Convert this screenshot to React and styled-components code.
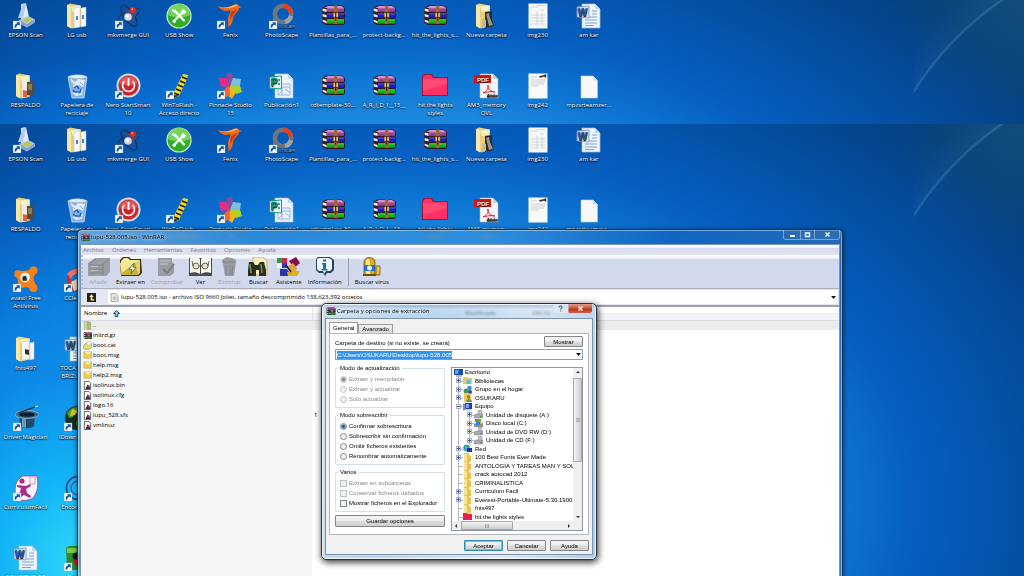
import React from "react";
import styled, { createGlobalStyle, css } from "styled-components";

const GlobalStyle = createGlobalStyle`
  * { box-sizing: border-box; }
  body {
    margin: 0;
    overflow: hidden;
    font-family: "Open Sans", "Noto Sans", sans-serif;
    font-size: 6px;
    line-height: 8px;
    color: #000;
  }
  button, input { font: inherit; color: inherit; margin: 0; padding: 0; border: 0; background: none; }
`;

const Page = styled.div`
  position: relative;
  display: flex;
  flex-direction: column;
  height: 100vh;
  overflow: hidden;
`;

const Wallpaper = styled.div`
  display: grid;
  grid-template-columns: repeat(20, 1fr);
  align-content: start;
  overflow: hidden;
  background:
    radial-gradient(circle at 266px 260px, transparent 313px, rgba(120, 180, 230, 0.28) 315px, rgba(90, 150, 200, 0.06) 317px, transparent 340px) right top / 110px 100px no-repeat,
    radial-gradient(circle at 100% 0, rgba(40, 90, 120, 0.45) 0, transparent 130px),
    radial-gradient(circle at 90px 440px, #34dcfa 0, #12b4f6 90px, rgba(10, 140, 236, 0.8) 190px, transparent 380px) left top / 100% 452px,
    radial-gradient(62% 97% at 39% 84%, #2aa4f0 0, #1c88dc 60%, #0c74d2 70%, #0660c2 80%, #0550a6 98%, #03407e 120%) left top / 100% 452px;
`;

const TopDesktop = styled(Wallpaper)`
  flex: none;
  height: 124px;
  grid-auto-rows: 70px;
`;

const MainDesktop = styled(Wallpaper)`
  flex: 1;
  min-height: 0;
  grid-auto-rows: 15.4%;
`;

const IconCell = styled.button`
  display: flex;
  flex-direction: column;
  align-items: center;
  gap: 2px;
  padding-top: 3px;
  color: #fff;
  white-space: pre;
  text-align: center;
  text-shadow: 0 1px 1px #000, 0 0 2px rgba(0, 0, 0, 0.8);
  ${(p) => p.$col && css`grid-column: ${p.$col};`}
`;

const Glyph = styled.svg`
  display: block;
  flex: none;
  width: ${(p) => p.$size || 26}px;
  height: ${(p) => p.$h || p.$size || 26}px;
`;

/* ---------- drawings ---------- */

const Shortcut = () => (
  <g>
    <rect x="0" y="18" width="8" height="8" fill="#f4f8fc" stroke="#8aa" strokeWidth=".4" />
    <path d="M1.600 24.600c0-2.600.8-3.800 2.600-4l-.8-1.300h3.400v3.600l-1-1.100c-1.500.2-2.300 1-2.600 2.800z" fill="#17539c" />
  </g>
);

const Books = () => (
  <g>
    <path d="M2 5l4-2.500h15l4 2.500v4l-1 1 1 1v4l-1 1 1 1v3.500l-2 1.500H6l-4-2.500V16l1-1-1-1v-3l1-1-1-1z" fill="#2c1c28" />
    <path d="M4 5L8 3h13l3 2H7z" fill="#d890cc" />
    <path d="M7 5h17v3.800H7z" fill="#9c4494" />
    <path d="M7 10.400h17v4.200H7z" fill="#1420d4" />
    <path d="M7 16.400h17v4.200H7z" fill="#10b018" />
    <path d="M7 5.600h17M7 11h17" stroke="#c478bc" strokeWidth=".6" />
    <path d="M7 16.900h17" stroke="#50e850" strokeWidth=".9" />
    <path d="M2.600 5.400L6.600 6.200v2.800L2.600 8zM2.600 11L6.600 12v2.600l-4-1.200zM2.600 16.600L6.600 18v2.600l-4-2z" fill="#ece6ea" />
    <path d="M14 2.500h3.400v18.500H14z" fill="#9c6a34" />
    <path d="M13 9.600h5.400v4.800H13z" fill="#e0c48c" stroke="#4c2a10" strokeWidth=".8" />
    <path d="M15.700 9v8.500" stroke="#2c1608" strokeWidth="1" />
  </g>
);

const OpenFolder = ({ children }) => (
  <g>
    <path d="M3 2l3-1.500L17 2.500v21L8 25.500 3 23z" fill="#e8cf7c" />
    <path d="M3 2l4 1.500v22L3 23z" fill="#f6e8ac" />
    <path d="M7 3.500l9-1v5L9 9z" fill="#fbf0c0" />
    {children}
  </g>
);

const Sheet = ({ children }) => (
  <g>
    <path d="M6 1h13l5 5v19H6z" fill="#eef4fb" stroke="#a8bcd4" strokeWidth=".7" />
    <path d="M19 1v5h5z" fill="#c4d6ea" />
    {children}
  </g>
);

const art = {
  scan: (
    <g>
      <path d="M8 1l5-.8 3 13.500-8 3z" fill="#dfeafc" />
      <path d="M5 15L10 .600l3 .4-3 14z" fill="#b4cbf0" />
      <path d="M6 17l9-4 7 3.500-8 5z" fill="#b9c8e4" />
      <path d="M9 17l6-2.500 4.500 2-6 3z" fill="#b5cf2c" />
      <path d="M6 17l8 4.500 8-5v3l-8 5-8-4z" fill="#8fa6d0" />
      <Shortcut />
    </g>
  ),
  folderDocs: (
    <OpenFolder>
      <path d="M10 5l6-1v20l-6 1zM17 5l5-1v19l-5 1z" fill="#f6f8fb" stroke="#b4bec8" strokeWidth=".5" />
      <path d="M12 13h2v4h-2zM18 12h2v4h-2z" fill="#4a86c4" />
    </OpenFolder>
  ),
  folderPics: (
    <OpenFolder>
      <path d="M9 7l6-1v18l-6 1z" fill="#f0ece4" />
      <path d="M14 9h7v14l-7-1z" fill="#5a4a30" />
      <path d="M15 11h4v6h-4z" fill="#8c7c54" />
      <path d="M10 17l4 1v6h-4z" fill="#e2603c" />
    </OpenFolder>
  ),
  folderDark: (
    <OpenFolder>
      <path d="M12 9l7-1v8l2 7-9 2z" fill="#2c2a28" />
      <path d="M13 11l3-1 1 5 3 7-4 1z" fill="#98948c" />
      <path d="M9 16l4 1v7l-4 1z" fill="#c8b890" />
    </OpenFolder>
  ),
  folderFonts: (
    <OpenFolder>
      <path d="M9 6l7-1v18l-7 1zM17 7l4-1v17l-4 1z" fill="#fafafa" stroke="#c0c0b8" strokeWidth=".5" />
      <path d="M12 13l4 1v5l-4-1z" fill="#333" />
    </OpenFolder>
  ),
  atom: (
    <g fill="none">
      <ellipse cx="14" cy="12" rx="12" ry="4.500" transform="rotate(-28 14 12)" stroke="#26364c" strokeWidth="1" />
      <ellipse cx="14" cy="13" rx="12" ry="5" transform="rotate(55 14 13)" stroke="#1c2c44" strokeWidth="1" />
      <circle cx="15" cy="12" r="5.500" fill="#454a78" />
      <circle cx="13" cy="14" r="3.800" fill="#d0d6e6" />
      <circle cx="12.400" cy="13.200" r="1.800" fill="#fff" />
      <circle cx="18" cy="7" r="3" fill="#e02a1c" />
      <circle cx="17.200" cy="6.200" r="1" fill="#ff9080" />
      <Shortcut />
    </g>
  ),
  usb: (
    <g>
      <circle cx="13" cy="13" r="12.600" fill="#d8ead0" />
      <circle cx="13" cy="13" r="11.400" fill="#2fae28" />
      <path d="M2 12a11 11 0 0 1 22 0c-6 3-16 3-22 0z" fill="#74d45c" />
      <path d="M8 18l8.500-8.500M9 8l9 9.500" stroke="#fff" strokeWidth="2.400" strokeLinecap="round" />
      <path d="M15 8l3-2.500.5 2 2 .8-2.500 3-3-.5zM6.500 6l3.500 1-1 3-3-2zM6 18l2-1.500 2 2-1.500 2z" fill="#fff" />
    </g>
  ),
  fenix: (
    <g>
      <path d="M1 3c6 3 11 1 16-1 3-1 5 0 5 1l3 1-3 1c0 4-5 5-6 10-.5 4-1 7-5 9 1-5-1-7 1-12 1-2 2-4 1-5-3 2-9 1-12-4z" fill="#f0691c" />
      <path d="M1 3c6 3 11 1 16-1 2-1 4 0 4 1-3 0-5 2-8 2S4 6 1 3z" fill="#ffb03c" />
      <path d="M14 9c2-1 5-2 6-3-1 4-5 5-6 11-1-2-1-6 0-8z" fill="#c63c0c" />
      <Shortcut />
    </g>
  ),
  photo: (
    <g fill="none">
      <circle cx="14" cy="11" r="8.200" stroke="#70757c" strokeWidth="4.600" />
      <path d="M14.500 2.800A8.200 8.200 0 0 1 22 9.500" stroke="#f03c14" strokeWidth="4.600" />
      <path d="M22 13a8.200 8.200 0 0 1-6 6" stroke="#9ca2aa" strokeWidth="4.600" />
      <path d="M4 10h4v12H4z" fill="#70757c" />
      <text x="9" y="25" fontSize="3.500" fill="#a4b4c8" fontFamily="Liberation Sans">TO SCAPE</text>
      <Shortcut />
    </g>
  ),
  rar: <Books />,
  scanPage: (
    <g>
      <path d="M3.500.5h19v25h-19z" fill="#f6f7f8" />
      <path d="M6 4h7M6 12h14M6 15h14M6 18h14M6 21h8M15 21h5M15 7h4M12 2.500h8M12 8v13M17 10v10" stroke="#c4c8ce" strokeWidth=".7" />
    </g>
  ),
  scanLetter: (
    <g>
      <path d="M3.500.5h19v25h-19z" fill="#fafafa" />
      <path d="M14 3.500l4-1 3-1v3l-2-1-4 1z" stroke="#333" strokeWidth=".5" fill="#333" />
      <path d="M6 4h6M6 7h14M6 9h14M6 11h13M6 13h8" stroke="#b4b8be" strokeWidth=".7" />
    </g>
  ),
  word: (
    <Sheet>
      <path d="M9 14h12M9 17h12M9 20h12M9 22.500h9M16 8h5M16 11h5" stroke="#7fa4d4" strokeWidth="1.200" />
      <path d="M1 4l12-1v12L1 14z" fill="#e8f0fa" stroke="#6f97cc" strokeWidth=".8" />
      <text x="2" y="12.500" fontSize="10" fontWeight="700" fill="#1f5bb0" fontFamily="Liberation Sans">W</text>
    </Sheet>
  ),
  publisher: (
    <Sheet>
      <path d="M9 11h12v11H9zM9 14h12M13 14v8M16 16l5 4M9 22l5-5" stroke="#8fb0e0" strokeWidth=".9" fill="none" />
      <path d="M.500 4l12-1v13L.500 15z" fill="#e4f6f2" stroke="#179c88" strokeWidth="1" />
      <text x="2" y="13" fontSize="10" fontWeight="700" fill="#0f8c78" fontFamily="Liberation Sans">P</text>
      <path d="M9 6h2v2H9zM9 10h2v2H9z" fill="#2ca894" />
    </Sheet>
  ),
  bin: (
    <g>
      <path d="M4 4h19l-3 21H8z" fill="#b0cdea" fillOpacity=".75" stroke="#dcebf8" strokeWidth=".7" />
      <path d="M4 4c2-3 17-3 19 0-3 2-16 2-19 0z" fill="#e4edf6" stroke="#8ea8c4" strokeWidth=".5" />
      <path d="M6 5l5 4 3-3 7 1-2 7-4-2-5 3zM8 20l4 3 6-1 1-6-6 3z" fill="#eef5fb" fillOpacity=".85" />
      <path d="M8 10l3 2M16 9l3 3M14 21l4-2" stroke="#8c98a8" strokeWidth=".8" />
      <path d="M10 15l3-2 2 3M11 19h5l1-3M9 17l2 2" stroke="#1f5ccc" strokeWidth="1.500" fill="none" />
    </g>
  ),
  nero: (
    <g fill="none">
      <circle cx="13.500" cy="12.500" r="12" fill="#dcdce0" />
      <circle cx="13.500" cy="12.500" r="10.500" fill="#a8a4a8" />
      <circle cx="13.500" cy="12.500" r="9.800" fill="#cc2428" />
      <path d="M4.500 10a9.500 9.500 0 0 1 18 0c-6 3-12 3-18 0z" fill="#e4585c" />
      <path d="M9.500 8a6 6 0 1 0 8 0" stroke="#fff" strokeWidth="1.600" />
      <path d="M13.500 5v8" stroke="#fff" strokeWidth="1.800" />
      <Shortcut />
    </g>
  ),
  flash: (
    <g>
      <path d="M17 1l5 1-1 4-8 17-5 2-1-4z" fill="#f4dc14" />
      <path d="M16 4l5 2M14 8l5 2M12 12l5 2M10 16l5 2M8 20l5 2" stroke="#15140c" strokeWidth="1.800" />
      <path d="M13 22.500l-5 2.500-1-3z" fill="#222" />
      <Shortcut />
    </g>
  ),
  pinnacle: (
    <g>
      <path d="M9 1l6-1 2 9-4 3z" fill="#86509c" />
      <path d="M16 5l8 1-1 7-10 0z" fill="#7cc0dc" />
      <path d="M13 13h10l2 6-6 2z" fill="#a8d42c" />
      <path d="M13 13l6 6-4 7-5-4z" fill="#f6b41c" />
      <path d="M12 12l1 10-6 3-4-4z" fill="#f2682c" />
      <path d="M2 5l8 0 3 8-9 1z" fill="#e42c86" />
      <Shortcut />
    </g>
  ),
  pink: (
    <g>
      <path d="M0 4l2-3h8l2 3h14v19H0z" fill="#a01434" />
      <path d="M1 4l2-2h6l2 3h14v17H1z" fill="#ff3064" />
      <path d="M1 6h24v5L1 18z" fill="#ff5c84" fillOpacity=".55" />
    </g>
  ),
  pdf: (
    <g>
      <path d="M7 1h13l5 5v19H7z" fill="#f8f8f8" stroke="#b0b0b0" strokeWidth=".6" />
      <path d="M20 1v5h5z" fill="#d0d0d0" />
      <path d="M1 2h17v8H1z" fill="#d4161c" />
      <text x="4" y="8.500" fontSize="6" fontWeight="700" fill="#fff" fontFamily="Liberation Sans">PDF</text>
      <path d="M10 20c4-2 6-5 5-8-1 4 3 7 7 7-4-1-8 0-12 1z" fill="none" stroke="#e0282c" strokeWidth="1" />
      <text x="14" y="24" fontSize="3.500" fontWeight="700" fill="#222" fontFamily="Liberation Sans">Adobe</text>
    </g>
  ),
  blank: (
    <g>
      <path d="M5 3h12l4.500 4.500V25H5z" fill="#f8f8f8" stroke="#c4ccd4" strokeWidth=".6" />
      <path d="M17 3v4.500h4.500z" fill="#d4dae2" />
    </g>
  ),
  avast: (
    <g fill="#f48218">
      <circle cx="20.500" cy="4.500" r="4" />
      <circle cx="5" cy="8" r="3.800" />
      <circle cx="20.500" cy="22" r="4" />
      <path d="M5 4.500c4 1 6 0 9 0 2 0 3-1 3-2l6 5c-2 2-3 4-2 7l3 7-6 4c-1-4-3-5-7-4-4 0-6 4-9 2 0-4 3-5 3-8s-1-4-3-5z" />
      <circle cx="12" cy="11.500" r="4.800" fill="#fff" />
      <text x="9.500" y="14" fontSize="7.500" fontWeight="700" fill="#222" fontFamily="Liberation Sans">a</text>
      <Shortcut />
    </g>
  ),
  ccleaner: (
    <g>
      <path d="M15 2a11.500 11.500 0 1 0 9 18l-7-3a6 6 0 1 1 0-8l6-4c-2-2-5-3-8-3z" fill="#d8281c" />
      <path d="M3 8c3-4 8-6 14-5l-3 5c-4 0-6 2-7 5z" fill="#f07060" />
      <path d="M7 16l8-4 4 9-9 4z" fill="#f0d8c0" />
      <Shortcut />
    </g>
  ),
  hat: (
    <g>
      <path d="M6 10h16l-1 11c-3 3-11 3-14 0z" fill="#244a6c" />
      <path d="M9 11h4v12l-4-1z" fill="#6a98bc" />
      <ellipse cx="14" cy="9.500" rx="12" ry="4" fill="#3e6c90" stroke="#9cc0dc" strokeWidth=".7" />
      <ellipse cx="14" cy="9.500" rx="8" ry="2.300" fill="#0e2030" />
      <path d="M5 8L25 1" stroke="#152030" strokeWidth="1.300" />
      <path d="M22 2l3-1" stroke="#fff" strokeWidth="1.300" />
      <Shortcut />
    </g>
  ),
  globe: (
    <g>
      <circle cx="13" cy="13" r="12" fill="#182c20" />
      <path d="M3 8c3-6 12-8 17-4l-4 4-5-1-2 5-4 1zM13 14l7-1 1 6-6 5-3-5z" fill="#3ca02c" />
      <path d="M8 4l6 2-3 4-5 1z" fill="#e4c030" />
      <Shortcut />
    </g>
  ),
  curriculum: (
    <g>
      <path d="M10 1h14c2 10 0 17-4 22-4 3-14 3-17 1C1 13 2 5 10 1z" fill="#fbf6fa" stroke="#a84c98" strokeWidth=".9" />
      <circle cx="9" cy="6" r="2.600" fill="#a8308c" />
      <path d="M17 2h5v7h-5z" fill="none" stroke="#d890c8" />
      <path d="M4 10l9 1 4-2 1 2-5 3 1 4 4 3-1 2-6-3-3 2-2-2 2-7-4-1z" fill="#a8308c" />
      <Shortcut />
    </g>
  ),
  encore: (
    <g fill="none">
      <circle cx="14" cy="13" r="11.500" stroke="#28488c" strokeWidth="1.800" />
      <circle cx="14" cy="13" r="7" stroke="#3c64a8" strokeWidth="1.500" />
      <Shortcut />
    </g>
  ),
  bug: (
    <g>
      <path d="M2 3l3-2h18v24H3z" fill="#2c8c2c" />
      <path d="M3 3h20v5H3z" fill="#7cc84c" />
      <circle cx="15" cy="15" r="6" fill="#c4281c" />
      <circle cx="12" cy="11" r="3.500" fill="#181818" />
      <Shortcut />
    </g>
  ),
};

const topIcons = [
  ["scan", "EPSON Scan"],
  ["folderDocs", "LG usb"],
  ["atom", "mkvmerge GUI"],
  ["usb", "USB Show"],
  ["fenix", "Fenix"],
  ["photo", "PhotoScape"],
  ["rar", "Plantillas_para_..."],
  ["rar", "protect-backg..."],
  ["rar", "hit_the_lights_s..."],
  ["folderDark", "Nueva carpeta"],
  ["scanPage", "img230"],
  ["word", "am kar"],
  ["folderPics", "RESPALDO", 1],
  ["bin", "Papelera de\nreciclaje"],
  ["nero", "Nero StartSmart\n10"],
  ["flash", "WinToFlash -\nAcceso directo"],
  ["pinnacle", "Pinnacle Studio\n15"],
  ["publisher", "Publicación1"],
  ["rar", "cdtemplate-30..."],
  ["rar", "A_R_I_D_I__13__"],
  ["pink", "hit the lights\nstyles"],
  ["pdf", "AM3_memory\nQVL"],
  ["scanLetter", "img242"],
  ["blank", "mpzsrteamzer..."],
];

const sideIcons = [
  ["avast", "avast! Free\nAntivirus", 1],
  ["ccleaner", "CCleaner"],
  ["folderFonts", "fnts497", 1],
  ["word", "TOCA DE LA\nBRIZUELAS"],
  ["hat", "Driver Magician", 1],
  ["globe", "IDownloader"],
  ["curriculum", "CurriculumFacil", 1],
  ["encore", "Encore 500"],
  ["word", "SOLICITUD DE", 1],
  ["bug", "Casper"],
];

const Icons = ({ items }) =>
  items.map(([name, label, col], i) => (
    <IconCell key={i} $col={col}>
      <Glyph viewBox="0 0 26 26">{art[name]}</Glyph>
      {label}
    </IconCell>
  ));

/* ---------- WinRAR window ---------- */

const Window = styled.section`
  position: absolute;
  display: flex;
  flex-direction: column;
  left: 77px;
  right: 181px;
  top: 229px;
  bottom: -8px;
  padding: 0 2px;
  border: 1px solid #1c3450;
  border-bottom: 0;
  border-radius: 5px 5px 0 0;
  background: linear-gradient(100deg, rgba(130, 180, 225, 0.75) 0, rgba(60, 145, 220, 0.55) 22%, rgba(60, 150, 225, 0.6) 50%, rgba(20, 100, 190, 0.7) 72%, rgba(70, 130, 190, 0.6) 100%);
  backdrop-filter: blur(2px);
  box-shadow: inset 0 0 0 1px rgba(200, 225, 245, 0.55), 0 1px 5px rgba(0, 0, 0, 0.6);
`;

const TitleBar = styled.header`
  display: flex;
  align-items: flex-start;
  flex: none;
  height: 14px;
`;

const Title = styled.h1`
  display: flex;
  align-items: center;
  gap: 1px;
  flex: 1;
  height: 14px;
  margin: 0;
  padding-left: 1px;
  font-size: 6px;
  font-weight: 400;
  text-shadow: 0 0 3px rgba(255, 255, 255, 0.9), 0 0 6px rgba(255, 255, 255, 0.7);
`;

const Controls = styled.div`
  display: flex;
  border: 1px solid rgba(190, 215, 240, 0.55);
  border-top: 0;
  border-radius: 0 0 3px 3px;
  overflow: hidden;
`;

const ControlButton = styled.button`
  display: grid;
  place-items: center;
  width: ${(p) => p.$w}px;
  height: 9px;
  background: ${(p) => p.$bg || "rgba(60, 110, 165, 0.4)"};
  & + & { border-left: 1px solid rgba(190, 215, 240, 0.55); }
`;

const Client = styled.div`
  display: flex;
  flex-direction: column;
  flex: 1;
  min-height: 0;
  border: 1px solid #7a94ae;
  border-bottom: 0;
  background: #fff;
`;

const MenuBar = styled.nav`
  display: flex;
  align-items: center;
  gap: 8px;
  flex: none;
  height: 10px;
  padding: 0 2px;
  color: #7c7c84;
  background: linear-gradient(#fff 0, #f2f4fa 25%, #d8dcee 35%, #dfe3f2 100%);
`;

const ToolBar = styled.div`
  display: flex;
  align-items: center;
  gap: 6px;
  flex: none;
  height: 34px;
  padding: 0 4px;
  border-left: 2px dotted #b8bfd8;
  border-bottom: 1px solid #a9adb8;
  background: linear-gradient(#fff 0, #f0f2fa 10%, #d3d9ec 14%, #d3d9ec 100%);
`;

const Tool = styled.button`
  display: flex;
  flex-direction: column;
  align-items: center;
  gap: 2px;
  min-width: 23px;
  color: ${(p) => (p.disabled ? "#a0a2ac" : "#000")};
`;

const Divider = styled.div`
  width: 1px;
  height: 28px;
  background: #9a9eac;
`;

const AddressRow = styled.div`
  display: flex;
  align-items: center;
  flex: none;
  height: 18px;
  gap: 12px;
  padding: 0 1px 0 6px;
  border-bottom: 2px solid #9c9fa8;
  background: #e4e7f3;
`;

const AddressBox = styled.div`
  display: flex;
  align-items: center;
  gap: 2px;
  flex: 1;
  height: 14px;
  padding: 0 2px;
  background: #fff;
`;

const AddressInput = styled.input`
  flex: 1;
  min-width: 0;
  outline: 0;
`;

const FileTable = styled.table`
  width: 100%;
  table-layout: fixed;
  border-collapse: collapse;
  text-align: left;
  th {
    height: 13px;
    padding: 0 3px;
    font-weight: 400;
    background: linear-gradient(#fff 0, #fff 40%, #f2f3f5 50%, #f4f5f7 100%);
    border-bottom: 1px solid #d8dce2;
  }
  th:first-child { border-right: 1px solid #e0e2e6; }
  td { height: 10px; padding: 0 2px; }
`;

const Files = styled.div`
  flex: 1;
  background: linear-gradient(90deg, #f6f6f6 231px, #fff 231px);
`;

const FileRow = styled.tr`
  background: ${(p) => (p.$active ? "#ececec" : "transparent")};
`;

const NameCell = styled.div`
  display: flex;
  align-items: center;
  gap: ${(p) => p.$gap || 1}px;
`;

const gray = "#9b9da4";

const tools = [
  ["Añadir", true, (
    <g fill={gray}>
      <path d="M1 6l7-5h15v14l-4 4H1z" />
      <path d="M2 8h14M2 12h14M2 16h14M16 7v11M8 2l-4 4M16 7l6-5" stroke="#7f8188" strokeWidth=".9" fill="none" />
      <path d="M4 9.500h7M4 13.500h7" stroke="#c4c6cc" strokeWidth=".8" />
    </g>
  )],
  ["Extraer en", false, (
    <g>
      <path d="M1 3l3-3h6l2 2h10l1 14-3 3H2z" fill="#3c3208" />
      <path d="M2 4l3-3h4l2 2h9v3H2z" fill="#f4ea9c" />
      <path d="M1 6h16l2 12H2z" fill="#ccb03c" />
      <path d="M1 6h15L3 16z" fill="#f6e890" />
      <path d="M16 5l5-2v13l-2 2z" fill="#e8d068" />
      <path d="M15 6l-5 6 3 .5-1 4 5-6-3-.5z" fill="#f8fff0" stroke="#2c6c2c" strokeWidth=".8" />
    </g>
  )],
  ["Comprobar", true, (
    <g fill={gray}>
      <path d="M3 1h14v4l2 2v9l-4 3H3z" />
      <path d="M5 4h10M5 7h8" stroke="#c4c6cc" />
      <path d="M8 12l4 4 7-9" fill="none" stroke="#7c7e86" strokeWidth="2" />
    </g>
  )],
  ["Ver", false, (
    <g>
      <path d="M0 1h23v18H0z" fill="#4c4c50" />
      <path d="M1 1c4-2 8-1 10 1v15c-3-2-7-2-10-1zM22 1c-4-2-8-1-10 1v15c3-2 7-2 10-1z" fill="#f4f4f0" />
      <circle cx="7" cy="9" r="3" fill="#dfe4da" stroke="#6c6434" />
      <circle cx="16" cy="9" r="3" fill="#dfe4da" stroke="#6c6434" />
      <path d="M10 9h3M4 9l-1-5M19 9l1-5M11.500 2v15" stroke="#4a4a3c" strokeWidth=".8" />
    </g>
  )],
  ["Eliminar", true, (
    <g fill={gray}>
      <path d="M4 3l5-3 8 2 1 3-2 14H7L5 7z" />
      <path d="M4 5h14M8 8v10M12 8v10M15 8l-1 10" stroke="#7e8088" strokeWidth=".9" fill="none" />
    </g>
  )],
  ["Buscar", false, (
    <g>
      <path d="M6 0h10l4 4v14H6z" fill="#f8ecb8" stroke="#a4904c" strokeWidth=".6" />
      <path d="M2 5h4l2 3h3l2-3h4l2 8v6h-7v-6H9v6H1v-6z" fill="#26301c" />
      <path d="M3 7l1 9M14 7l1 9" stroke="#84906c" strokeWidth="1.500" />
    </g>
  )],
  ["Asistente", false, (
    <g>
      <path d="M0 1h5v5H0z" fill="#2ca03c" /><path d="M5 1h5v5H5z" fill="#c42c50" />
      <path d="M0 6h5v5H0z" fill="#f4f0ec" /><path d="M5 6h5v5H5z" fill="#2c3cc0" />
      <path d="M3 12h7l5 7H3z" fill="#2834a8" />
      <path d="M12 4l7-4 4 6-6 5z" fill="#82104c" />
      <path d="M11 9l5-3 4 5-1 4-5 1z" fill="#e0a43c" />
      <path d="M10 15l7-1 6 0-3 5h-9z" fill="#d8b020" />
      <path d="M9 8l5 7" stroke="#111" strokeWidth="1.400" />
    </g>
  )],
  ["Información", false, (
    <g>
      <path d="M3 2l2-2h12l4 3v10l-3 3h-4l-2 3-2-3H6l-3-3z" fill="#26445c" />
      <path d="M4 2l2-1h10l3 2v9l-2 2h-4l-2 3-1-3H6l-2-2z" fill="#eef8fc" />
      <path d="M9 6h4v6h1.500v1.500H8.500V12H10V7.500H9zM10 2.500h3v2h-3z" fill="#1c6cb0" />
    </g>
  )],
];

const VirusArt = (
  <g>
    <path d="M4 5c0-6 11-6 11 0v14H4z" fill="#d4ac28" stroke="#5c4408" strokeWidth=".7" />
    <path d="M6 5c0-4 4-4 4 0v13H6z" fill="#fbe878" />
    <path d="M4 8h11v6H4z" fill="#2c6cc4" />
    <circle cx="9.500" cy="11" r="2.500" fill="#e4f0fc" />
    <path d="M16 9l4 0v9h-4z" fill="#e8c83c" stroke="#5c4408" strokeWidth=".7" />
    <path d="M3 17h13v2H3z" fill="#6c4c10" />
  </g>
);

const fileArt = {
  up: <g><path d="M1 0h5l3 1v9H1z" fill="#a8b884" /><path d="M2 0h2v10H2z" fill="#d0dcae" /></g>,
  rar: <g transform="scale(.4)"><Books /></g>,
  cat: <g><path d="M0 5l4-3 6 1v4L5 10 0 8z" fill="#e4dc70" stroke="#88802c" strokeWidth=".6" /><path d="M4 1l5-1v4L5 5z" fill="#f8f8ec" stroke="#999" strokeWidth=".4" /></g>,
  msg: <g><path d="M1 1h9v7H1z" fill="#f0cc54" stroke="#b48c1c" strokeWidth=".5" /><path d="M1 1l4.500 4L10 1" fill="#fdf0b0" stroke="#c8a030" strokeWidth=".5" /></g>,
  bin: <g><path d="M1.500.5h5l2 2v7h-7z" fill="#fff" stroke="#333" strokeWidth=".8" /><path d="M3 8l2-4 2 1 1 4H3z" fill="#262a50" /><path d="M5 5h2v2H5z" fill="#c43c50" /></g>,
};

const files = [
  ["up", ".."],
  ["rar", "initrd.gz"],
  ["cat", "boot.cat"],
  ["msg", "boot.msg"],
  ["msg", "help.msg"],
  ["msg", "help2.msg"],
  ["bin", "isolinux.bin"],
  ["bin", "isolinux.cfg"],
  ["bin", "logo.16"],
  ["bin", "lupu_528.sfs", "1"],
  ["bin", "vmlinuz"],
];

const Caret = () => (
  <Glyph $size={5} viewBox="0 0 5 5"><path d="M0 1h5L2.500 4z" fill="#111" /></Glyph>
);

/* ---------- extraction dialog ---------- */

const Dialog = styled.section`
  position: absolute;
  left: 321px;
  top: 303px;
  width: 276px;
  padding: 0 3px 4px;
  border: 1px solid #26323e;
  border-radius: 5px;
  background: linear-gradient(100deg, rgba(190, 216, 240, 0.75), rgba(140, 188, 232, 0.6) 30%, rgba(190, 216, 240, 0.55) 70%, rgba(150, 195, 230, 0.8));
  backdrop-filter: blur(1px);
  box-shadow: inset 0 0 0 1px rgba(255, 255, 255, 0.75), 1px 2px 7px rgba(0, 0, 0, 0.85);
  font-family: "Liberation Sans", Arial, sans-serif;
`;

const DialogBody = styled.div`
  padding: 3px;
  border: 1px solid #7e93a8;
  background: #f0f0f0;
`;

const DialogTitle = styled(Title)`
  font-family: "Open Sans", "Noto Sans", sans-serif;
`;

const Tabs = styled.div`
  display: flex;
  align-items: flex-end;
  height: 11px;
`;

const Tab = styled.button`
  height: ${(p) => (p.$on ? 11 : 9)}px;
  padding: 0 3px;
  border: 1px solid #9a9ca0;
  border-bottom: 0;
  background: ${(p) => (p.$on ? "#fff" : "linear-gradient(#f2f2f2, #d8d8d8)")};
`;

const TabPage = styled.div`
  padding: 2px 5px 3px;
  border: 1px solid #b4b6ba;
  background: #fff;
`;

const TopLine = styled.div`
  display: flex;
  justify-content: space-between;
  align-items: flex-end;
  margin-bottom: 2px;
`;

const Button = styled.button`
  width: ${(p) => p.$w || "39px"};
  height: ${(p) => p.$h || 11}px;
  border: 1px solid ${(p) => (p.$main ? "#2c8cb8" : "#83858a")};
  border-radius: 1px;
  background: linear-gradient(#f4f4f4 0, #ececec 48%, #dcdcdc 52%, #d0d0d0 100%);
  ${(p) => p.$main && css`box-shadow: inset 0 0 0 1px #58cdf0;`}
`;

const Combo = styled.div`
  display: flex;
  justify-content: space-between;
  align-items: center;
  height: 11px;
  margin-bottom: 4px;
  padding: 0 1px;
  border: 1px solid #6fa8d8;
`;

const PathInput = styled.input`
  field-sizing: content;
  height: 8px;
  color: #fff;
  background: #3093f4;
  outline: 0;
`;

const Columns = styled.div`
  display: flex;
  align-items: flex-start;
  gap: 6px;
`;

const Options = styled.div`
  display: flex;
  flex-direction: column;
  gap: 3px;
  width: 110px;
`;

const Group = styled.fieldset`
  min-width: 0;
  margin: 0;
  padding: 2px 4px 3px;
  border: 1px solid #d4dfe6;
  border-radius: 2px;
  legend { height: 8px; margin-left: -2px; padding: 0 2px; }
`;

const Choice = styled.label`
  display: flex;
  align-items: center;
  gap: 2px;
  height: 10px;
  color: ${(p) => (p.$off ? "#84868a" : "#000")};
  input {
    appearance: none;
    flex: none;
    width: 7px;
    height: 7px;
    border: 1px solid ${(p) => (p.$off ? "#bcc0c4" : "#84888e")};
    background: #f0f1f2;
  }
  input[type="radio"] { border-radius: 50%; }
  input:checked {
    background: radial-gradient(circle, ${(p) => (p.$off ? "#888" : "#1c5c94")} 0 1px, #f0f1f2 3px);
  }
`;

const TreeBox = styled.div`
  display: grid;
  grid-template-columns: 1fr 9px;
  flex: 1;
  min-width: 0;
  margin-top: 3px;
  border: 1px solid #8a98a8;
`;

const Tree = styled.ul`
  display: flex;
  flex-direction: column;
  height: 153px;
  margin: 0;
  padding: 0 0 0 2px;
  overflow: hidden;
  list-style: none;
`;

const Node = styled.li`
  display: flex;
  align-items: center;
  flex: 1 0 0;
  min-height: 0;
  white-space: nowrap;
  svg { margin-right: ${(p) => (p.$root ? 2 : 3)}px; }
`;

const Guide = styled.span`
  display: grid;
  place-items: center;
  flex: none;
  align-self: stretch;
  width: ${(p) => (p.$wide ? 11 : 9)}px;
  background:
    linear-gradient(#b4b8c0, #b4b8c0) 4px 0 / 1px 100% no-repeat,
    linear-gradient(#b4b8c0, #b4b8c0) 4px 4px / ${(p) => (p.$wide ? 0 : 5)}px 1px no-repeat;
`;

const Expander = styled.button`
  display: grid;
  width: 5px;
  height: 5px;
  justify-self: start;
  margin-left: 2px;
  border: 1px solid #a4b0c8;
  background:
    linear-gradient(#3c50a0, #3c50a0) center / 3px 1px no-repeat,
    ${(p) => (p.$open ? "" : "linear-gradient(#3c50a0, #3c50a0) center / 1px 3px no-repeat,")}
    #fff;
`;

const ScrollBar = styled.div`
  display: flex;
  flex-direction: ${(p) => (p.$row ? "row" : "column")};
  justify-content: space-between;
  align-items: center;
  padding: ${(p) => (p.$row ? "0 2px" : "2px 0")};
  height: ${(p) => (p.$row ? "9px" : "auto")};
  background: #efefef;
`;

const Track = styled.div`
  display: flex;
  align-items: stretch;
  flex: 1;
  align-self: stretch;
  margin: ${(p) => (p.$row ? "0 3px" : "4px 0")};
`;

const Thumb = styled.div`
  display: grid;
  place-items: center;
  width: ${(p) => p.$w};
  height: ${(p) => p.$h};
  border: 1px solid #a4a6aa;
  border-radius: 1px;
  background: linear-gradient(${(p) => (p.$row ? "180deg" : "90deg")}, #f6f6f6, #e0e0e2 50%, #cdced2);
`;

const Corner = styled.div`
  background: #efefef;
`;

const Footer = styled.footer`
  display: flex;
  justify-content: flex-end;
  gap: 4px;
  padding-top: 5px;
`;

const treeArt = {
  desk: <g><path d="M0 1h9v6H0z" fill="#1c4ca0" /><path d="M1 2h4l-1 4H1z" fill="#5ca4e8" /><path d="M2 8h6" stroke="#667" /></g>,
  lib: <g><path d="M0 1h4l1 1h4v6H0z" fill="#ecca58" /><path d="M3 3h5v5H3z" fill="#80c8e8" /><path d="M4 5h3v3H4z" fill="#7cc06c" /></g>,
  group: <g><circle cx="3" cy="6" r="2.500" fill="#3c9c4c" /><circle cx="6.500" cy="3" r="2.300" fill="#3c8ce0" /><circle cx="7" cy="7" r="2" fill="#1c4cb0" /></g>,
  user: <g><path d="M1 0h5l2 2v7H1z" fill="#ecca58" /><circle cx="5.500" cy="4" r="1.700" fill="#a87038" /><path d="M3 9c0-4 6-4 6 0z" fill="#5c9c50" /></g>,
  pc: <g><path d="M2 1h7v6H2z" fill="#1c38c0" /><path d="M3 2h3v4H3z" fill="#7ca4f4" /><path d="M0 2h2v6H0zM3 8h5" fill="#8c94a4" stroke="#888" strokeWidth=".7" /></g>,
  drive: <g><path d="M0 5l2-1h7v4H0z" fill="#a8acb0" stroke="#6c7074" strokeWidth=".4" /><path d="M4 0h4v4H4z" fill="#c8bcd0" stroke="#888" strokeWidth=".4" /><path d="M6 6h2v1H6z" fill="#3ca03c" /></g>,
  disk: <g><path d="M0 5l2-1h7v4H0z" fill="#8c9094" /><path d="M1 0h3v3H1z" fill="#e05c2c" /><path d="M4 0h3v3H4z" fill="#5cb03c" /><path d="M2 3h4v3H2z" fill="#2c80d8" /><path d="M6 3h2v2H6z" fill="#f0c030" /></g>,
  net: <g><circle cx="3.500" cy="4" r="3.200" fill="#2c98b8" /><path d="M4 4h5v4H4z" fill="#1c30b8" /><path d="M2 2l2 1-1 3z" fill="#7cd05c" /></g>,
  folder: <g><path d="M1 0h5v2l2 1v6H1z" fill="#e8c350" /><path d="M1 1h3v8H1z" fill="#f8e498" /></g>,
  pink: <g><path d="M0 1h4l1 1h4v6H0z" fill="#e81c50" /></g>,
};

// [icon, text, level, expander]
const tree = [
  ["desk", "Escritorio", 0],
  ["lib", "Bibliotecas", 1, "+"],
  ["group", "Grupo en el hogar", 1, "+"],
  ["user", "OSUKARU", 1, "+"],
  ["pc", "Equipo", 1, "-"],
  ["drive", "Unidad de disquete (A:)", 2, "+"],
  ["disk", "Disco local (C:)", 2, "+"],
  ["drive", "Unidad de DVD RW (D:)", 2, "+"],
  ["drive", "Unidad de CD (F:)", 2, "+"],
  ["net", "Red", 1, "+"],
  ["folder", "100 Best Fonts Ever Made", 1, "+"],
  ["folder", "ANTOLOGIA Y TAREAS MAN Y SOLO", 1],
  ["folder", "crack autocad 2012", 1],
  ["folder", "CRIMINALISTICA", 1],
  ["folder", "Curriculum Facil", 1, "+"],
  ["folder", "Everest-Portable-Ultimate-5.30.1900-By", 1, "+"],
  ["folder", "fnts497", 1],
  ["pink", "hit the lights styles", 1],
];

const Arrow = ({ d }) => (
  <Glyph $size={4} viewBox="0 0 4 4"><path d={d} fill="#333" /></Glyph>
);

const RarIcon = ({ size }) => (
  <Glyph $size={size} viewBox="1 0 25 24"><Books /></Glyph>
);

const ExtractDialog = () => (
  <Dialog>
    <TitleBar>
      <DialogTitle as="h2"><RarIcon size={10} />Carpeta y opciones de extracción</DialogTitle>
      <Controls>
        <ControlButton $w={15} $bg="rgba(225, 235, 245, 0.7)" aria-label="Ayuda">
          <Glyph $size={7} viewBox="0 0 7 7"><path d="M2 2.500C2 .500 5 .500 5 2.300 5 3.400 3.500 3.400 3.500 4.600M3.500 5.500v1" stroke="#5c6c7c" strokeWidth="1.200" fill="none" /></Glyph>
        </ControlButton>
        <ControlButton $w={24} $bg="linear-gradient(#e0a090, #c84c34 50%, #b8301c 55%, #d0604c)" aria-label="Cerrar">
          <Glyph $size={7} viewBox="0 0 7 7"><path d="M1.500 1.500l4 4M5.500 1.500l-4 4" stroke="#fff" strokeWidth="1.500" /></Glyph>
        </ControlButton>
      </Controls>
    </TitleBar>
    <DialogBody>
      <Tabs>
        <Tab $on>General</Tab>
        <Tab>Avanzado</Tab>
      </Tabs>
      <TabPage>
        <TopLine>
          <label htmlFor="path">Carpeta de destino (si no existe, se creará)</label>
          <Button>Mostrar</Button>
        </TopLine>
        <Combo>
          <PathInput id="path" defaultValue="C:\Users\OSUKARU\Desktop\lupu-528.005" />
          <button aria-label="Rutas recientes"><Caret /></button>
        </Combo>
        <Columns>
          <Options>
            <Group>
              <legend>Modo de actualización</legend>
              <Choice $off><input type="radio" name="update" defaultChecked disabled />Extraer y reemplazar</Choice>
              <Choice $off><input type="radio" name="update" disabled />Extraer y actualizar</Choice>
              <Choice $off><input type="radio" name="update" disabled />Solo actualizar</Choice>
            </Group>
            <Group>
              <legend>Modo sobrescribir</legend>
              <Choice><input type="radio" name="overwrite" defaultChecked />Confirmar sobrescritura</Choice>
              <Choice><input type="radio" name="overwrite" />Sobrescribir sin confirmación</Choice>
              <Choice><input type="radio" name="overwrite" />Omitir ficheros existentes</Choice>
              <Choice><input type="radio" name="overwrite" />Renombrar automaticamente</Choice>
            </Group>
            <Group>
              <legend>Varios</legend>
              <Choice $off><input type="checkbox" disabled />Extraer en subcarpetas</Choice>
              <Choice $off><input type="checkbox" disabled />Conservar ficheros dañados</Choice>
              <Choice><input type="checkbox" />Mostrar ficheros en el Explorador</Choice>
            </Group>
            <Button $w="100%" $h={12}>Guardar opciones</Button>
          </Options>
          <TreeBox>
            <Tree>
              {tree.map(([icon, text, level, exp]) => (
                <Node key={text} $root={level === 0}>
                  {level === 2 && <Guide $wide />}
                  {level > 0 && (
                    <Guide>{exp && <Expander $open={exp === "-"} aria-label={text} />}</Guide>
                  )}
                  <Glyph $size={9} viewBox="0 0 9 9">{treeArt[icon]}</Glyph>
                  {text}
                </Node>
              ))}
            </Tree>
            <ScrollBar>
              <Arrow d="M0 3l2-2 2 2z" />
              <Track><Thumb $w="100%" $h="63%"><Glyph $size={4} viewBox="0 0 4 4"><path d="M0 .500h4M0 2h4M0 3.500h4" stroke="#888" strokeWidth=".6" /></Glyph></Thumb></Track>
              <Arrow d="M0 1l2 2 2-2z" />
            </ScrollBar>
            <ScrollBar $row>
              <Arrow d="M3 0L1 2l2 2z" />
              <Track $row><Thumb $row $w="50%" $h="100%"><Glyph $size={4} viewBox="0 0 4 4"><path d="M.500 0v4M2 0v4M3.500 0v4" stroke="#888" strokeWidth=".6" /></Glyph></Thumb></Track>
              <Arrow d="M1 0l2 2-2 2z" />
            </ScrollBar>
            <Corner />
          </TreeBox>
        </Columns>
      </TabPage>
      <Footer>
        <Button $main>Aceptar</Button>
        <Button>Cancelar</Button>
        <Button>Ayuda</Button>
      </Footer>
    </DialogBody>
  </Dialog>
);

const App = () => (
  <>
    <GlobalStyle />
    <Page>
      <TopDesktop><Icons items={topIcons} /></TopDesktop>
      <MainDesktop><Icons items={[...topIcons, ...sideIcons]} /></MainDesktop>

      <Window>
        <TitleBar>
          <Title><RarIcon size={9} />lupu-528.005.iso - WinRAR</Title>
          <Controls>
            <ControlButton $w={16} aria-label="Minimizar">
              <Glyph $size={7} viewBox="0 0 7 7"><path d="M1 4h5v2H1z" fill="#fff" /></Glyph>
            </ControlButton>
            <ControlButton $w={14} aria-label="Maximizar">
              <Glyph $size={7} viewBox="0 0 7 7"><path d="M1.500 2h4v3.500h-4z" stroke="#fff" strokeWidth="1.300" fill="none" /></Glyph>
            </ControlButton>
            <ControlButton $w={25} aria-label="Cerrar">
              <Glyph $size={7} viewBox="0 0 7 7"><path d="M1.500 1.500l4 4M5.500 1.500l-4 4" stroke="#fff" strokeWidth="1.400" /></Glyph>
            </ControlButton>
          </Controls>
        </TitleBar>
        <Client>
          <MenuBar>
            {["Archivo", "Órdenes", "Herramientas", "Favoritos", "Opciones", "Ayuda"].map((m) => (
              <button key={m}>{m}</button>
            ))}
          </MenuBar>
          <ToolBar>
            {tools.map(([label, disabled, drawing]) => (
              <Tool key={label} disabled={disabled}>
                <Glyph $size={23} $h={19} viewBox="0 0 23 19">{drawing}</Glyph>
                {label}
              </Tool>
            ))}
            <Divider />
            <Tool>
              <Glyph $size={23} $h={19} viewBox="0 0 23 19">{VirusArt}</Glyph>
              Buscar virus
            </Tool>
          </ToolBar>
          <AddressRow>
            <button aria-label="Subir un nivel">
              <Glyph $size={9} viewBox="0 0 10 10">
                <path d="M0 0h10v10H0z" fill="#24220c" />
                <path d="M5 1.500l2.500 3H6V7h2v1.200H4V4.500H2.500z" fill="#f4ec9c" />
              </Glyph>
            </button>
            <AddressBox>
              <Glyph $size={9} viewBox="0 0 9 9">
                <path d="M1 .500h5l2 2v6H1z" fill="#e4e6e8" stroke="#8c9094" strokeWidth=".7" />
                <circle cx="4.500" cy="5" r="1.800" fill="#b8c0b8" />
              </Glyph>
              <AddressInput
                aria-label="Ruta"
                readOnly
                value="lupu-528.005.iso - archivo ISO 9660 Joliet, tamaño descomprimido 138,623,392 octetos"
              />
              <Caret />
            </AddressBox>
          </AddressRow>
          <Files>
            <FileTable>
              <colgroup>
                <col style={{ width: 231 }} />
                <col style={{ width: 150 }} />
                <col style={{ width: 67 }} />
                <col />
              </colgroup>
              <thead>
                <tr>
                  <th>
                    <NameCell $gap={6}>
                      Nombre
                      <Glyph $size={7} viewBox="0 0 7 7"><path d="M3.500.5l3 3H4.800v3H2.200v-3H.500z" fill="#7cd4f4" stroke="#123c5c" strokeWidth=".9" /></Glyph>
                    </NameCell>
                  </th>
                  <th />
                  <th>Modificado</th>
                  <th>CRC32</th>
                </tr>
              </thead>
              <tbody>
                {files.map(([icon, name, size], i) => (
                  <FileRow key={name} $active={i === 0}>
                    <td>
                      <NameCell><Glyph $size={9} viewBox="0 0 10 10">{fileArt[icon]}</Glyph>{name}</NameCell>
                    </td>
                    <td>{size}</td>
                    <td />
                    <td />
                  </FileRow>
                ))}
              </tbody>
            </FileTable>
          </Files>
        </Client>
      </Window>

      <ExtractDialog />
    </Page>
  </>
);

export default App;
